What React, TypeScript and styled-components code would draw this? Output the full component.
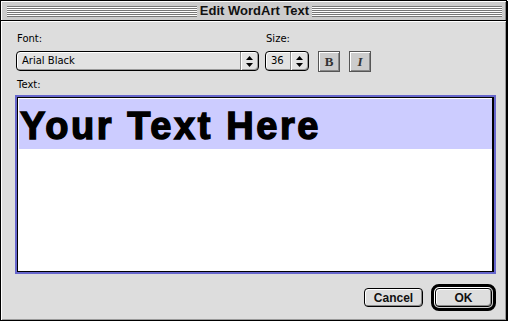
import { FunctionComponent } from "react";
import styled, { createGlobalStyle } from "styled-components";

const GlobalStyle = createGlobalStyle`
  html, body {
    margin: 0;
    padding: 0;
    background: #ffffff;
  }
  body {
    font-family: "DejaVu Sans", sans-serif;
  }
`;

const Window = styled.div`
  width: 507px;
  height: 321px;
  box-sizing: border-box;
  border: 1px solid #000;
  box-shadow: 1px 1px 0 #000;
  background: #dddddd;
  display: flex;
  flex-direction: column;
`;

const TitleBar = styled.div`
  height: 20px;
  flex-shrink: 0;
  box-sizing: border-box;
  border-bottom: 1px solid #000;
  background: #cccccc;
  box-shadow: inset 1px 1px 0 #fff, inset -1px 0 0 #888;
  display: flex;
  align-items: center;
  gap: 3px;
  padding: 0 4px 0 6px;
`;

const Stripes = styled.div`
  flex: 1;
  height: 11px;
  margin-top: 1px;
  background: repeating-linear-gradient(
    to bottom,
    #777 0px,
    #777 1px,
    #fff 1px,
    #fff 2px
  );
`;

const Title = styled.span`
  font-family: "Liberation Sans", Arial, sans-serif;
  font-weight: 700;
  font-size: 13px;
  color: #111;
  line-height: 14px;
  white-space: nowrap;
`;

const Content = styled.div`
  flex: 1;
  display: flex;
  flex-direction: column;
  padding: 12px 10px 9px 14px;
  box-shadow: inset 1px 1px 0 #fff, inset -1px -1px 0 #999;
`;

const TopRow = styled.div`
  display: flex;
  align-items: flex-start;
  padding-left: 1px;
`;

const Field = styled.div<{ $width: number; $gap: number }>`
  width: ${(p) => p.$width}px;
  margin-right: ${(p) => p.$gap}px;
  display: flex;
  flex-direction: column;
  gap: 6px;
`;

const Label = styled.div`
  font-family: "DejaVu Sans", sans-serif;
  font-size: 10px;
  line-height: 12px;
  color: #000;
  padding-left: 1px;
`;

const Popup = styled.div`
  height: 20px;
  box-sizing: border-box;
  border: 1px solid #000;
  border-radius: 4px;
  background: #e2e2e2;
  box-shadow: inset 1px 1px 0 #fff, inset -1px -1px 0 #999;
  display: flex;
  align-items: stretch;
`;

const PopupValue = styled.div`
  flex: 1;
  font-family: "DejaVu Sans", sans-serif;
  font-size: 10px;
  line-height: 18px;
  padding-left: 5px;
  color: #000;
  white-space: nowrap;
`;

const PopupArrows = styled.div`
  width: 17px;
  border-left: 1px solid #888;
  box-shadow: inset 1px 0 0 #fff;
  display: flex;
  align-items: center;
  justify-content: center;
`;

const StyleButton = styled.div<{ $italic?: boolean }>`
  width: 22px;
  height: 21px;
  margin-top: 18px;
  margin-right: 9px;
  box-sizing: border-box;
  border: 1px solid #555;
  background: #cccccc;
  box-shadow: inset 1px 1px 0 #fff, inset -1px -1px 0 #888;
  display: flex;
  align-items: center;
  justify-content: center;
  font-family: "Liberation Serif", "Times New Roman", serif;
  font-weight: 700;
  font-style: ${(p) => (p.$italic ? "italic" : "normal")};
  font-size: 13px;
  color: #333;
`;

const TextLabel = styled(Label)`
  margin: 7px 0 4px 1px;
`;

const TextBox = styled.div`
  flex: 1;
  box-sizing: border-box;
  border: 2px solid #6666cc;
  background: #fff;
  display: flex;
  flex-direction: column;
`;

const TextInner = styled.div`
  flex: 1;
  border: 1px solid #000;
  border-right-width: 2px;
  padding: 1px 0 0 1px;
  background: #fff;
`;

const Selection = styled.div`
  height: 50px;
  box-sizing: border-box;
  background: #ccccff;
  padding: 4px 0 0 1px;
  font-family: "Liberation Sans", Arial, sans-serif;
  font-weight: 900;
  font-size: 38px;
  line-height: 46px;
  letter-spacing: 2.6px;
  color: #000;
  -webkit-text-stroke: 1.4px #000;
  white-space: nowrap;
`;

const ButtonRow = styled.div`
  display: flex;
  justify-content: flex-end;
  align-items: center;
  gap: 8px;
  margin-top: 10px;
`;

const Button = styled.div<{ $width: number }>`
  width: ${(p) => p.$width}px;
  height: 19px;
  box-sizing: border-box;
  border: 1px solid #000;
  border-radius: 4px;
  background: #dedede;
  box-shadow: inset 1px 1px 0 #fff, inset -1px -1px 0 #888;
  display: flex;
  align-items: center;
  justify-content: center;
  font-family: "Liberation Sans", Arial, sans-serif;
  font-weight: 700;
  font-size: 12px;
  color: #111;
`;

const DefaultRing = styled.div`
  padding: 1px;
  border: 3px solid #000;
  border-radius: 8px;
  background: #d0d0d0;
  box-shadow: inset 1px 1px 0 #fff;
  display: flex;
`;

const UpDown: FunctionComponent = () => (
  <svg width="7" height="11" viewBox="0 0 7 11">
    <path d="M3.5 0 L7 4 L0 4 Z" fill="#000" />
    <path d="M0 7 L7 7 L3.5 11 Z" fill="#000" />
  </svg>
);

const App: FunctionComponent = () => {
  return (
    <>
      <GlobalStyle />
      <Window>
        <TitleBar>
          <Stripes />
          <Title>Edit WordArt Text</Title>
          <Stripes />
        </TitleBar>
        <Content>
          <TopRow>
            <Field $width={243} $gap={6}>
              <Label>Font:</Label>
              <Popup>
                <PopupValue>Arial Black</PopupValue>
                <PopupArrows>
                  <UpDown />
                </PopupArrows>
              </Popup>
            </Field>
            <Field $width={44} $gap={9}>
              <Label>Size:</Label>
              <Popup>
                <PopupValue>36</PopupValue>
                <PopupArrows>
                  <UpDown />
                </PopupArrows>
              </Popup>
            </Field>
            <StyleButton>B</StyleButton>
            <StyleButton $italic>I</StyleButton>
          </TopRow>
          <TextLabel>Text:</TextLabel>
          <TextBox>
            <TextInner>
              <Selection>Your Text Here</Selection>
            </TextInner>
          </TextBox>
          <ButtonRow>
            <Button $width={59}>Cancel</Button>
            <DefaultRing>
              <Button $width={57}>OK</Button>
            </DefaultRing>
          </ButtonRow>
        </Content>
      </Window>
    </>
  );
};

export default App;
